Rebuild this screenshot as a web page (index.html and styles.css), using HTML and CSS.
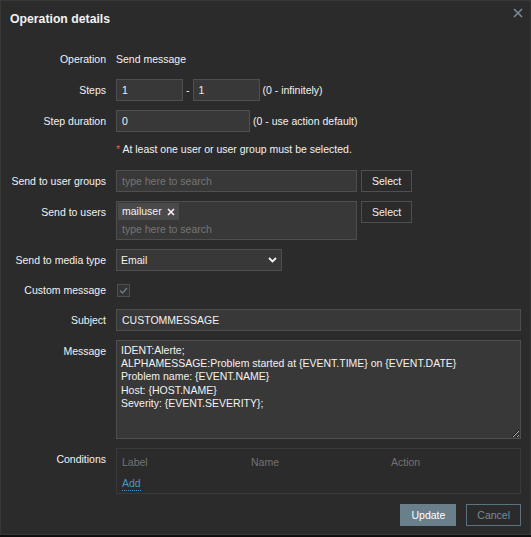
FILE: index.html
```html
<!DOCTYPE html>
<html>
<head>
    <meta charset="utf-8" />
    <title>Operation details</title>
    <link rel="stylesheet" href="styles.css">
</head>
<body>
    <div class="dialog">
        <div class="dialog-header">
            <h4>Operation details</h4>
            <button class="btn-close" title="Close">
                <svg width="10" height="10" viewBox="0 0 10 10">
                    <path d="M1 1 L9 9 M9 1 L1 9" stroke="#768d99" stroke-width="1.6" fill="none" />
                </svg>
            </button>
        </div>

        <div class="form-grid">
            <label class="form-label">Operation</label>
            <div class="form-field">Send message</div>

            <label class="form-label">Steps</label>
            <div class="form-field inline">
                <input class="text-input narrow" type="text" value="1">
                <span>-</span>
                <input class="text-input narrow" type="text" value="1">
                <span>(0 - infinitely)</span>
            </div>

            <label class="form-label">Step duration</label>
            <div class="form-field inline">
                <input class="text-input medium" type="text" value="0">
                <span>(0 - use action default)</span>
            </div>

            <div></div>
            <div class="form-field note"><span class="asterisk">*</span> At least one user or user group must be selected.</div>

            <label class="form-label">Send to user groups</label>
            <div class="form-field inline wide-gap">
                <div class="multiselect">
                    <div class="ms-placeholder">type here to search</div>
                </div>
                <button class="btn-alt">Select</button>
            </div>

            <label class="form-label">Send to users</label>
            <div class="form-field inline top wide-gap">
                <div class="multiselect">
                    <div class="ms-tags">
                        <span class="ms-tag">mailuser
                            <svg width="8" height="8" viewBox="0 0 8 8">
                                <path d="M1 1 L7 7 M7 1 L1 7" stroke="#f2f2f2" stroke-width="1.6" fill="none" />
                            </svg>
                        </span>
                    </div>
                    <div class="ms-placeholder">type here to search</div>
                </div>
                <button class="btn-alt">Select</button>
            </div>

            <label class="form-label">Send to media type</label>
            <div class="form-field inline">
                <div class="select-box">
                    <span>Email</span>
                    <svg width="9" height="6" viewBox="0 0 9 6">
                        <path d="M1 1 L4.5 4.5 L8 1" stroke="#f2f2f2" stroke-width="1.8" fill="none" />
                    </svg>
                </div>
            </div>

            <label class="form-label short">Custom message</label>
            <div class="form-field inline short">
                <span class="checkbox">
                    <svg width="11" height="11" viewBox="0 0 11 11">
                        <path d="M2 5.5 L4.5 8 L9 3" stroke="#6e7d86" stroke-width="1.4" fill="none" />
                    </svg>
                </span>
            </div>

            <label class="form-label">Subject</label>
            <div class="form-field">
                <input class="text-input full" type="text" value="CUSTOMMESSAGE">
            </div>

            <label class="form-label">Message</label>
            <div class="form-field">
                <textarea class="textarea" rows="7">IDENT:Alerte;
ALPHAMESSAGE:Problem started at {EVENT.TIME} on {EVENT.DATE}
Problem name: {EVENT.NAME}
Host: {HOST.NAME}
Severity: {EVENT.SEVERITY};</textarea>
            </div>

            <label class="form-label">Conditions</label>
            <div class="form-field">
                <div class="conditions">
                    <div class="cond-row cond-head">
                        <span>Label</span>
                        <span>Name</span>
                        <span>Action</span>
                    </div>
                    <div class="cond-row">
                        <a class="link" href="#">Add</a>
                    </div>
                </div>
            </div>
        </div>

        <div class="dialog-footer">
            <button class="btn-main">Update</button>
            <button class="btn-cancel">Cancel</button>
        </div>
    </div>
</body>
</html>
```

FILE: styles.css
```css
body {
    margin: 0;
    background-color: #0e0e0e;
    font-family: "Liberation Sans", Arial, sans-serif;
    font-size: 10.5px;
    color: #f2f2f2;
}

.dialog {
    position: relative;
    width: 531px;
    height: 535px;
    box-sizing: border-box;
    background-color: #2b2b2b;
    border: 1px solid #383838;
}

.dialog-header {
    padding: 11px 10px 0 9px;
    height: 15px;
}

.dialog-header h4 {
    margin: 0;
    font-size: 12.25px;
    line-height: 15px;
    font-weight: bold;
    color: #f2f2f2;
}

.btn-close {
    position: absolute;
    top: 7px;
    right: 7px;
    padding: 0;
    border: none;
    background: transparent;
    width: 10px;
    height: 10px;
}

.btn-close svg {
    display: block;
}

.form-grid {
    display: grid;
    grid-template-columns: 105px 1fr;
    column-gap: 10px;
    row-gap: 9px;
    margin-top: 21px;
    padding-right: 9px;
}

.form-label {
    text-align: right;
    line-height: 22px;
    white-space: nowrap;
}

.form-label.short {
    line-height: 20px;
}

.form-field {
    line-height: 22px;
}

.form-field.inline {
    display: flex;
    align-items: center;
    gap: 3px;
}

.form-field.inline.top {
    align-items: flex-start;
}

.form-field.wide-gap {
    gap: 4px;
}

.form-field.short {
    height: 20px;
}

.form-field.note {
    line-height: 17px;
    padding-bottom: 3px;
}

.asterisk {
    color: #e45959;
}

.text-input {
    box-sizing: border-box;
    height: 22px;
    margin: 0;
    padding: 0 5px;
    background-color: #383838;
    border: 1px solid #4f4f4f;
    color: #f2f2f2;
    font-family: inherit;
    font-size: 10.5px;
    outline: none;
}

.text-input.narrow {
    width: 67px;
}

.text-input.medium {
    width: 134px;
}

.text-input.full {
    display: block;
    width: 100%;
}

.multiselect {
    box-sizing: border-box;
    width: 241px;
    min-height: 22px;
    background-color: #383838;
    border: 1px solid #4f4f4f;
    padding: 0 1px;
}

.ms-tags {
    display: flex;
    padding-top: 1px;
}

.ms-tag {
    display: flex;
    align-items: center;
    gap: 5px;
    height: 17px;
    line-height: 17px;
    padding: 0 4px;
    background-color: #4a4a4a;
    color: #f2f2f2;
}

.ms-placeholder {
    line-height: 20px;
    padding-left: 4px;
    color: #767676;
}

.ms-tags + .ms-placeholder {
    line-height: 19px;
}

.btn-alt {
    box-sizing: border-box;
    height: 22px;
    padding: 0 10px;
    background-color: #2b2b2b;
    border: 1px solid #4f4f4f;
    color: #f2f2f2;
    font-family: inherit;
    font-size: 10.5px;
}

.select-box {
    box-sizing: border-box;
    display: flex;
    align-items: center;
    justify-content: space-between;
    width: 166px;
    height: 22px;
    padding: 0 4px 0 4px;
    background-color: #383838;
    border: 1px solid #4f4f4f;
    line-height: 20px;
}

.checkbox {
    box-sizing: border-box;
    display: flex;
    align-items: center;
    justify-content: center;
    width: 13px;
    height: 13px;
    margin-left: 1px;
    background-color: #333333;
    border: 1px solid #4f4f4f;
}

.textarea {
    display: block;
    box-sizing: border-box;
    width: 100%;
    height: 99px;
    margin: 0;
    padding: 3px 4px;
    background-color: #383838;
    border: 1px solid #4f4f4f;
    color: #f2f2f2;
    font-family: inherit;
    font-size: 10.5px;
    line-height: 13.2px;
    outline: none;
}

.conditions {
    box-sizing: border-box;
    border: 1px solid #3a3a3a;
    padding: 5px 4px 2px 5px;
    line-height: 17px;
}

.cond-row {
    display: grid;
    grid-template-columns: 129px 140px 1fr;
    align-items: center;
    height: 17px;
}

.cond-head {
    color: #737373;
    margin-bottom: 3px;
}

.link {
    color: #4796c4;
    text-decoration: none;
    border-bottom: 1px dotted #4796c4;
    line-height: 13px;
    justify-self: start;
    margin-top: 2px;
}

.dialog-footer {
    display: flex;
    justify-content: flex-end;
    gap: 10px;
    margin-top: 10px;
    padding-right: 9px;
}

.btn-main,
.btn-cancel {
    box-sizing: border-box;
    height: 22px;
    padding: 0 10px;
    font-family: inherit;
    font-size: 10.5px;
}

.btn-main {
    background-color: #69808c;
    border: 1px solid #69808c;
    color: #ffffff;
}

.btn-cancel {
    background-color: transparent;
    border: 1px solid #5b7380;
    color: #768d99;
}
```
